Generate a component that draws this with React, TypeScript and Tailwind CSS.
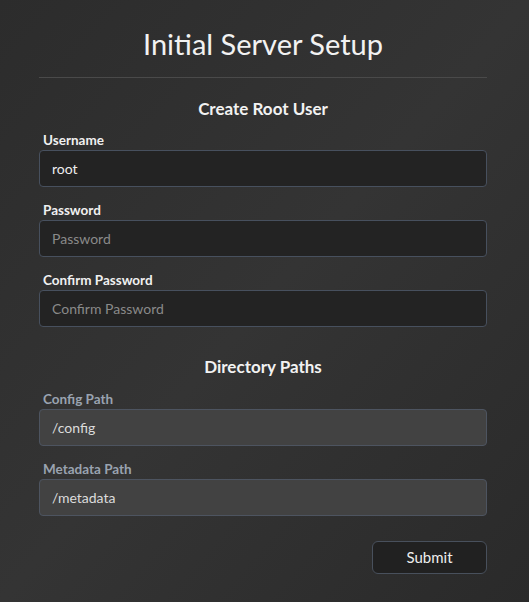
const rootFields = [
  { label: "Username", value: "root", placeholder: "Username", type: "text" },
  { label: "Password", value: "", placeholder: "Password", type: "password" },
  { label: "Confirm Password", value: "", placeholder: "Confirm Password", type: "password" },
];

const pathFields = [
  { label: "Config Path", value: "/config" },
  { label: "Metadata Path", value: "/metadata" },
];

const App = () => {
  return (
    <div
      className="min-h-[602px] bg-linear-to-br from-[#2c2c2c] via-[#343434] to-[#2a2a2a] text-white"
      style={{ fontFamily: '"Source Sans Pro", Lato, sans-serif' }}
    >
      <div className="ml-[39px] mr-[42px] pt-[26px] pb-7">
        <h1 className="text-center text-[29px] leading-9 text-[#f2f2f2]">Initial Server Setup</h1>
        <div className="mt-[15px] h-px bg-[#4a4a4a]" />

        <h2 className="mt-[19px] text-center text-[17px] font-bold leading-6 text-[#f2f2f2]">Create Root User</h2>
        <div className="mt-[10px] flex flex-col gap-[14px]">
          {rootFields.map((f) => (
            <div key={f.label}>
              <label className="block pl-1 text-[13.5px] font-bold leading-[19px] text-[#f0f0f0]">{f.label}</label>
              <input
                type={f.type}
                defaultValue={f.value}
                placeholder={f.placeholder}
                className="h-[37px] w-full rounded-[4px] border border-[#47505e] bg-[#232323] px-3 text-[14px] text-[#eee] placeholder:text-[#8a8a8a] outline-none"
              />
            </div>
          ))}
        </div>

        <h2 className="mt-[28px] text-center text-[17px] font-bold leading-6 text-[#f2f2f2]">Directory Paths</h2>
        <div className="mt-[11px] flex flex-col gap-[14px]">
          {pathFields.map((f) => (
            <div key={f.label}>
              <label className="block pl-1 text-[13.5px] font-bold leading-[19px] text-[#9aa3b0]">{f.label}</label>
              <input
                type="text"
                defaultValue={f.value}
                disabled
                className="h-[37px] w-full rounded-[4px] border border-[#4d5460] bg-[#424242] px-3 text-[14px] text-[#dcdcdc] outline-none"
              />
            </div>
          ))}
        </div>

        <div className="mt-[25px] flex justify-end">
          <button className="h-[33px] w-[115px] rounded-[6px] border border-[#48505c] bg-[#212121] text-[15px] text-[#eee]">
            Submit
          </button>
        </div>
      </div>
    </div>
  );
};

export default App;
